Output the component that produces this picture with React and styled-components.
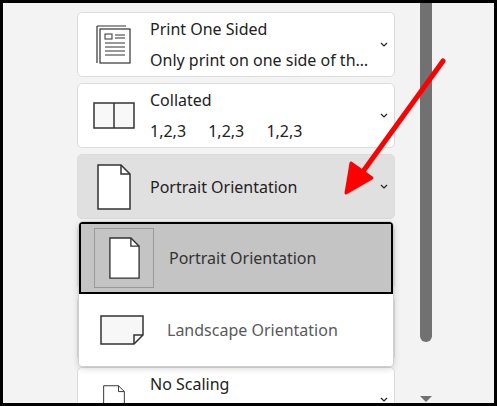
import React from "react";
import styled, { createGlobalStyle } from "styled-components";

const Global = createGlobalStyle`
  body { margin: 0; font-family: "Noto Sans", "Open Sans", sans-serif; }
`;

const Frame = styled.div`
  position: relative;
  width: 497px; height: 406px; box-sizing: border-box;
  border: 3px solid #000; background: #f3f3f3; overflow: hidden;
  display: flex;
`;
const Column = styled.div`
  width: 318px; margin-left: 74px; padding-top: 9px;
  display: flex; flex-direction: column; gap: 6px;
`;
const Card = styled.div`
  height: 65px; flex: none; box-sizing: border-box;
  border: 1px solid #dcdcdc; border-radius: 5px;
  background: ${p => (p.$active ? "#e0e0e0" : "#fff")};
  display: flex; align-items: center; color: #222;
`;
const IconBox = styled.div`
  width: 72px; display: flex; justify-content: center; flex: none;
`;
const Texts = styled.div`
  flex: 1; min-width: 0; display: flex; flex-direction: column; gap: 11px;
  font-size: 16px; line-height: 20px;
`;
const Sub = styled.div`
  white-space: nowrap; overflow: hidden; text-overflow: ellipsis; word-spacing: ${p => p.$ws || "0"};
`;
const Chevron = styled.div`
  width: 20px; flex: none; display: flex; justify-content: center;
`;
const Scroll = styled.div`
  margin-left: 24px; width: 13px; display: flex; flex-direction: column; align-items: center;
`;
const Thumb = styled.div`
  width: 12px; height: 339px; background: #717171; border-radius: 0 0 6px 6px;
`;
const ScrollArrow = styled.div`
  margin-top: 54px; width: 0; height: 0;
  border-left: 6px solid transparent; border-right: 6px solid transparent;
  border-top: 6px solid #717171;
`;
const Popup = styled.div`
  position: absolute; left: 75px; top: 218px; width: 316px; height: 146px;
  box-sizing: border-box; background: #fff; border: 1px solid #d0d0d0; border-radius: 5px;
  box-shadow: 0 2px 6px rgba(0,0,0,0.15); display: flex; flex-direction: column; overflow: hidden;
`;
const Option = styled.div`
  height: 72px; box-sizing: border-box; display: flex; align-items: center;
  background: ${p => (p.$sel ? "#c4c4c4" : "#fff")};
  border: ${p => (p.$sel ? "2px solid #000" : "none")};
  color: ${p => (p.$sel ? "#333" : "#5a5a5a")}; font-size: 16px;
`;
const OptIcon = styled.div`
  width: 58px; height: 58px; margin: 0 15px 0 13px; display: flex; align-items: center; justify-content: center;
  border: 1px solid ${p => (p.$sel ? "#9a9a9a" : "transparent")};
`;
const Arrow = styled.svg`
  position: absolute; left: 0; top: 0; pointer-events: none;
`;

const PageIcon = ({ w = 34, h = 46 }) => (
  <svg width={w} height={h} viewBox="0 0 34 46">
    <path d="M1 1 H24 L33 10 V45 H1 Z" fill="#fff" stroke="#333" strokeWidth="1.5" />
    <path d="M24 1 V10 H33" fill="none" stroke="#333" strokeWidth="1.5" />
  </svg>
);
const Landscape = () => (
  <svg width="44" height="30" viewBox="0 0 44 30">
    <path d="M1 1 H43 V20 L34 29 H1 Z" fill="#f7f7f7" stroke="#333" strokeWidth="1.5" />
    <path d="M43 20 H34 V29" fill="none" stroke="#333" strokeWidth="1.5" />
  </svg>
);
const DocIcon = () => (
  <svg width="36" height="40" viewBox="0 0 36 40">
    <path d="M1 1 H30 M1 1 V38" stroke="#333" strokeWidth="1.2" fill="none" />
    <rect x="4" y="4" width="30" height="34" fill="#fff" stroke="#333" strokeWidth="1.2" />
    <rect x="9" y="9" width="7" height="5" fill="none" stroke="#333" strokeWidth="1" />
    <path d="M19 10 H29 M19 13 H29 M9 18 H29 M9 22 H29 M9 26 H29 M9 30 H29" stroke="#333" strokeWidth="1" />
  </svg>
);
const Book = () => (
  <svg width="42" height="27" viewBox="0 0 42 27">
    <rect x="1" y="1" width="40" height="25" fill="#f8f8f8" stroke="#333" strokeWidth="1.5" />
    <path d="M21 1 V26" stroke="#333" strokeWidth="1.5" />
  </svg>
);

const Chev = () => (
  <Chevron>
    <svg width="8" height="5" viewBox="0 0 8 5">
      <path d="M1 1 L4 4 L7 1" fill="none" stroke="#222" strokeWidth="1.2" />
    </svg>
  </Chevron>
);

export default function App() {
  return (
    <>
      <Global />
      <Frame>
        <Column>
          <Card>
            <IconBox><DocIcon /></IconBox>
            <Texts><div>Print One Sided</div><Sub>Only print on one side of the page</Sub></Texts>
            <Chev />
          </Card>
          <Card>
            <IconBox><Book /></IconBox>
            <Texts><div>Collated</div><Sub $ws="18px">1,2,3 1,2,3 1,2,3</Sub></Texts>
            <Chev />
          </Card>
          <Card $active>
            <IconBox><PageIcon /></IconBox>
            <Texts><div>Portrait Orientation</div></Texts>
            <Chev />
          </Card>
          <Card><IconBox /><Texts><div>Letter</div><Sub>21.59 cm x 27.94 cm</Sub></Texts><Chev /></Card>
          <Card><IconBox /><Texts><div>Normal Margins</div><Sub>Left: 2.54 cm Right: 2.54 cm</Sub></Texts><Chev /></Card>
          <Card>
            <IconBox><PageIcon w={22} h={30} /></IconBox>
            <Texts><div>No Scaling</div><Sub>Print sheets at their actual size</Sub></Texts>
            <Chev />
          </Card>
        </Column>
        <Scroll>
          <Thumb />
          <ScrollArrow />
        </Scroll>
        <Popup>
          <Option $sel>
            <OptIcon $sel><PageIcon w={31} h={42} /></OptIcon>
            Portrait Orientation
          </Option>
          <Option>
            <OptIcon><Landscape /></OptIcon>
            Landscape Orientation
          </Option>
        </Popup>
        <Arrow width="497" height="406" viewBox="0 0 497 406">
          <line x1="440" y1="58" x2="356" y2="174" stroke="#f00" strokeWidth="5" strokeLinecap="round" />
          <path d="M343 190 L348 160 L369 175 Z" fill="#f00" stroke="#f00" strokeWidth="3" strokeLinejoin="round" />
        </Arrow>
      </Frame>
    </>
  );
}
